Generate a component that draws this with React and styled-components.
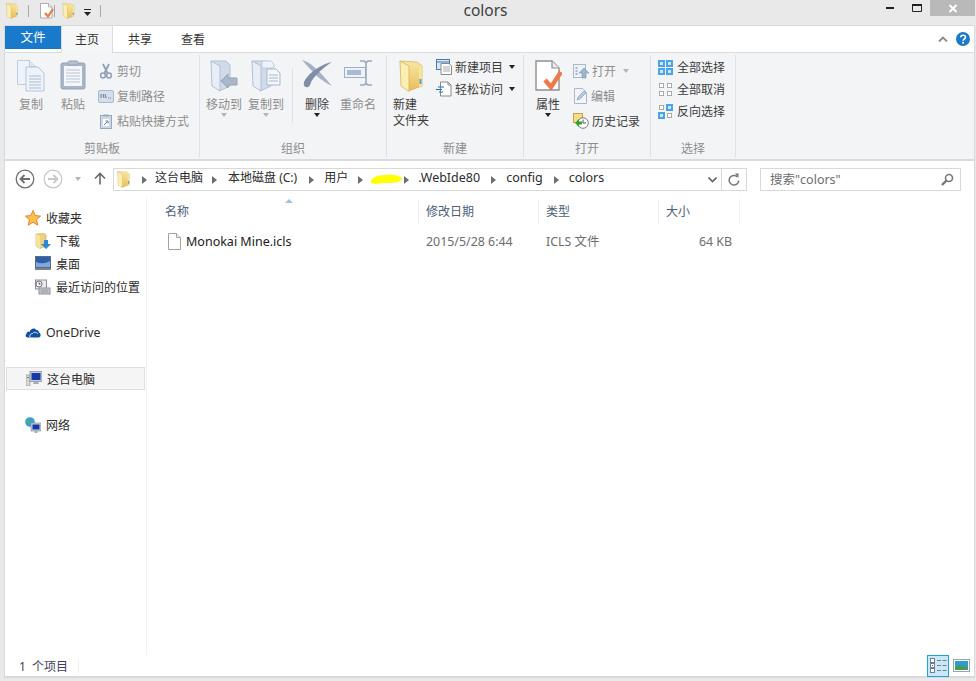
import React from 'react';
import styled, { createGlobalStyle } from 'styled-components';

const GlobalStyle = createGlobalStyle`
    html, body {
        margin: 0;
        padding: 0;
        background: #e9e9e9;
    }
    body {
        font-family: "Noto Sans", "Noto Sans CJK SC", sans-serif;
        font-size: 12px;
    }
    svg {
        display: block;
        flex: none;
    }
`;

const Window = styled.div`
    width: 976px;
    height: 681px;
    display: flex;
    flex-direction: column;
    background: #e9e9e9;
    overflow: hidden;
`;

const TitleBar = styled.div`
    height: 25px;
    flex: none;
    display: grid;
    grid-template-columns: 1fr auto 1fr;
`;

const QuickAccess = styled.div`
    display: flex;
    align-items: flex-start;
    padding: 3px 0 0 5px;
`;

const QuickSep = styled.div`
    width: 1px;
    height: 12px;
    margin: 2px ${(p) => p.$right}px 0 ${(p) => p.$left}px;
    background: #a8a8a8;
`;

const QuickMenu = styled.svg`
    margin: 6px 9px 0;
`;

const Title = styled.div`
    font-size: 15.5px;
    line-height: 21px;
    color: #404040;
    padding-right: 5px;
`;

const WindowButtons = styled.div`
    display: flex;
    justify-content: flex-end;
    align-items: flex-start;
    padding-right: 1px;
`;

const WinButton = styled.div`
    width: ${(p) => (p.$close ? 45 : 27)}px;
    height: 16px;
    display: flex;
    align-items: center;
    justify-content: center;
    background: ${(p) => (p.$close ? '#b9b9b9' : 'transparent')};
`;

const Client = styled.div`
    flex: 1;
    margin: 0 1px 3px 4px;
    min-height: 0;
    display: flex;
    flex-direction: column;
    background: #fff;
    border: 1px solid #d9d9d9;
    border-bottom: 2px solid #d9d9d9;
`;

const TabRow = styled.div`
    height: 26px;
    flex: none;
    display: flex;
    align-items: flex-start;
    border-bottom: 1px solid #dadbdc;
    position: relative;
`;

const FileTab = styled.div`
    width: 56px;
    height: 23px;
    line-height: 23px;
    text-align: center;
    color: #fff;
    background: #1979ca;
    font-size: 12.5px;
`;

const Tab = styled.div`
    width: ${(p) => p.$w}px;
    height: ${(p) => (p.$active ? 27 : 26)}px;
    line-height: 27px;
    text-align: center;
    color: #333;
    font-size: 12px;
    box-sizing: border-box;
    ${(p) => p.$active && `
        background: #f5f6f7;
        border-right: 1px solid #dadbdc;
        border-left: 1px solid #dadbdc;
    `}
`;

const TabTools = styled.div`
    margin-left: auto;
    height: 26px;
    display: flex;
    align-items: center;
    gap: 8px;
    padding-right: 4px;
`;

const Ribbon = styled.div`
    height: 106px;
    flex: none;
    display: flex;
    background: #f3f4f6;
    border-bottom: 2px solid #dadbdc;
    box-sizing: content-box;
`;

const Group = styled.div`
    width: ${(p) => p.$w}px;
    flex: none;
    margin-top: 2px;
    margin-bottom: 2px;
    display: flex;
    flex-direction: column;
    border-right: 1px solid #dfe1e4;
    box-sizing: border-box;
`;

const GroupBody = styled.div`
    flex: 1;
    display: flex;
    align-items: flex-start;
    padding-left: ${(p) => p.$pad || 0}px;
`;

const GroupLabel = styled.div`
    height: 20px;
    line-height: 24px;
    text-align: center;
    color: #8e8e8e;
`;

const BigButton = styled.div`
    width: ${(p) => p.$w || 42}px;
    flex: none;
    display: flex;
    flex-direction: column;
    align-items: center;
    color: ${(p) => (p.$off ? '#8d8d8d' : '#3c3c3c')};
    line-height: 16px;
    white-space: nowrap;
`;

const BigIcon = styled.div`
    height: 36px;
    padding-top: 5px;
    margin-bottom: 1px;
    display: flex;
    justify-content: center;
    box-sizing: content-box;
`;

const Caret = styled.div`
    width: 0;
    height: 0;
    flex: none;
    margin: ${(p) => p.$m || '0'};
    border-left: 3.5px solid transparent;
    border-right: 3.5px solid transparent;
    border-top: 4px solid ${(p) => (p.$off ? '#b5b5b5' : '#222')};
`;

const RibbonSep = styled.div`
    width: 1px;
    height: 55px;
    margin: 13px 5px 0 5px;
    background: #dfe1e4;
    flex: none;
`;

const SmallColumn = styled.div`
    display: flex;
    flex-direction: column;
    gap: ${(p) => p.$gap}px;
    padding-top: ${(p) => p.$top}px;
    margin-left: ${(p) => p.$left || 0}px;
`;

const SmallButton = styled.div`
    height: 18px;
    display: flex;
    align-items: center;
    gap: ${(p) => p.$gap || 3}px;
    white-space: nowrap;
    color: ${(p) => (p.$off ? '#8d8d8d' : '#3c3c3c')};
`;

const ShortcutSlot = styled.span`
    width: 16px;
    display: flex;
    justify-content: center;
`;

const AddressRow = styled.div`
    height: 37px;
    flex: none;
    display: flex;
    align-items: flex-start;
    padding-top: 7px;
    box-sizing: border-box;
`;

const NavButtons = styled.div`
    width: 108px;
    height: 23px;
    flex: none;
    display: flex;
    align-items: center;
    padding: 0 0 2px 10px;
    box-sizing: border-box;
    gap: ${(p) => p.$gap || 0}px;
`;

const NavSpacer = styled.span`
    width: ${(p) => p.$w}px;
`;

const AddressField = styled.div`
    width: 634px;
    height: 23px;
    flex: none;
    display: flex;
    align-items: center;
    border: 1px solid #d9d9d9;
    box-sizing: border-box;
    color: #2c2c2c;
    padding-left: 2px;
`;

const Crumb = styled.span`
    margin: 0 ${(p) => p.$after}px 4px ${(p) => p.$before}px;
    line-height: 20px;
    font-size: ${(p) => (p.$latin ? 12.5 : 12)}px;
    white-space: nowrap;
`;

const CrumbArrow = styled.div`
    width: 0;
    height: 0;
    flex: none;
    margin-left: ${(p) => p.$left || 0}px;
    border-top: 4px solid transparent;
    border-bottom: 4px solid transparent;
    border-left: 5px solid #6e6e6e;
`;

const Redaction = styled.svg`
    margin-left: 7px;
`;

const AddressEnd = styled.div`
    margin-left: auto;
    display: flex;
    align-items: center;
    height: 100%;
`;

const RefreshCell = styled.div`
    width: 24px;
    height: 100%;
    display: flex;
    align-items: center;
    justify-content: center;
    border-left: 1px solid #d9d9d9;
    margin-left: 4px;
`;

const SearchField = styled.div`
    width: 201px;
    height: 23px;
    margin-left: 13px;
    flex: none;
    display: flex;
    align-items: center;
    justify-content: space-between;
    padding: 0 6px 0 9px;
    box-sizing: border-box;
    border: 1px solid #d9d9d9;
    color: #6d6d6d;
    font-size: 12.5px;
`;

const SearchText = styled.span`
    margin-bottom: 3px;
`;

const Main = styled.div`
    flex: 1;
    min-height: 0;
    display: flex;
`;

const Sidebar = styled.div`
    width: 142px;
    flex: none;
    padding-top: 8px;
    box-sizing: border-box;
    border-right: 1px solid #f1f1f1;
`;

const NavSection = styled.div`
    margin-bottom: 23px;
`;

const NavRow = styled.div`
    height: 23px;
    display: flex;
    align-items: center;
    gap: 5px;
    padding-left: ${(p) => (p.$child ? 30 : 20)}px;
    color: #2c2c2c;
    font-size: ${(p) => (p.$latin ? 12.3 : 12)}px;
    white-space: nowrap;
    box-sizing: border-box;
    ${(p) => p.$selected && `
        margin: 0 1px;
        padding-left: 19px;
        background: #f5f5f5;
        border: 1px solid #dedede;
    `}
`;

const FileArea = styled.div`
    flex: 1;
    position: relative;
`;

const HeaderRow = styled.div`
    height: 23px;
    display: grid;
    grid-template-columns: 272px 120px 120px 81px;
    padding-top: 1px;
`;

const HeaderCell = styled.div`
    border-right: 1px solid #eef0f3;
    padding-left: ${(p) => (p.$first ? 18 : 7)}px;
    line-height: 25px;
    color: #4c6079;
    font-size: 12px;
`;

const SortMark = styled.div`
    position: absolute;
    left: 138px;
    top: 1px;
    width: 0;
    height: 0;
    border-left: 4px solid transparent;
    border-right: 4px solid transparent;
    border-bottom: 4px solid #9fc3dd;
`;

const FileRow = styled.div`
    height: 22px;
    margin-top: 8px;
    display: grid;
    grid-template-columns: 272px 120px 120px 73px;
    align-items: center;
    color: #6d6d6d;
`;

const NameCell = styled.div`
    display: flex;
    align-items: center;
    gap: 5px;
    padding-left: 21px;
    color: #202020;
    font-size: 12.5px;
`;

const MetaCell = styled.div`
    padding-left: ${(p) => (p.$right ? 0 : 7)}px;
    text-align: ${(p) => (p.$right ? 'right' : 'left')};
    font-size: 12.4px;
`;

const StatusBar = styled.div`
    height: 21px;
    flex: none;
    display: flex;
    align-items: center;
    color: #3f3f5a;
    padding-left: 14px;
    word-spacing: 3px;
`;

const StatusSep = styled.div`
    width: 1px;
    height: 14px;
    margin-left: 10px;
    background: #f0f0f0;
`;

const ViewButtons = styled.div`
    margin-left: auto;
    height: 100%;
    display: flex;
    align-items: center;
    gap: 1px;
    padding-right: 2px;
`;

const ViewButton = styled.div`
    width: 22px;
    height: 22px;
    display: flex;
    align-items: center;
    justify-content: center;
    box-sizing: border-box;
    ${(p) => p.$active && `
        background: #cbe8f6;
        border: 1px solid #26a0da;
    `}
`;

const Folder = ({ w = 14, h = 17 }) => (
    <svg width={w} height={h} viewBox="0 0 24 32">
        <defs>
            <linearGradient id="folderBack" x1="0" y1="0" x2="0" y2="1">
                <stop offset="0" stopColor="#f8e7a6" />
                <stop offset="1" stopColor="#e9bd57" />
            </linearGradient>
        </defs>
        <path d="M1 1 L18 2 L23 6 L23 26 L9 31 Z" fill="url(#folderBack)" stroke="#d0aa52" strokeWidth="0.7" />
        <path d="M1 1 L10 6 L10 31.5 L2 26 Z" fill="#fbeeb5" stroke="#d6b25c" strokeWidth="0.8" />
        <path d="M20 6 L23 6 L23 26 L20 27 Z" fill="#f8e39a" />
        <rect x="20.5" y="19" width="2" height="5" fill="#5b9bd5" />
    </svg>
);

const DocCheck = ({ w = 15, h = 17 }) => (
    <svg width={w} height={h} viewBox="0 0 28 32">
        <path d="M2 1 H18 L25 8 V30 H2 Z" fill="#fff" stroke="#8f8f8f" strokeWidth="1.4" />
        <path d="M18 1 V8 H25" fill="#ececec" stroke="#8f8f8f" strokeWidth="1.2" />
        <path d="M11 20 L17 27 L27 12" fill="none" stroke="#ec7a4b" strokeWidth="4.5" />
    </svg>
);

const PalePage = ({ x, y }) => (
    <g>
        <path d={`M${x} ${y} h12 l6 6 v18 h-18 z`} fill="#eef2f9" stroke="#bfcde0" strokeWidth="1" />
        <path d={`M${x + 12} ${y} v6 h6`} fill="#dfe7f2" stroke="#bfcde0" strokeWidth="1" />
    </g>
);

const CopyIcon = () => (
    <svg width="28" height="32" viewBox="0 0 28 32">
        <PalePage x={0.5} y={0.5} />
        <path d="M9 7 h12 l6 6 v18 h-18 z" fill="#eef2f9" stroke="#b5c5da" />
        <path d="M12 16 h12 M12 19 h12 M12 22 h12 M12 25 h12 M12 28 h12" stroke="#aebccf" strokeWidth="1" />
    </svg>
);

const PasteIcon = () => (
    <svg width="26" height="30" viewBox="0 0 26 30">
        <rect x="1" y="3" width="24" height="26" rx="2" fill="#a9b6c8" stroke="#94a3b7" />
        <rect x="4" y="6" width="18" height="20" fill="#f4f6fa" />
        <path d="M6 10 h14 M6 13 h14 M6 16 h14 M6 19 h14 M6 22 h14" stroke="#b8c5d6" />
        <rect x="8" y="1" width="10" height="4" rx="1.5" fill="#b6c1d0" stroke="#94a3b7" />
    </svg>
);

const ScissorsIcon = () => (
    <svg width="16" height="16" viewBox="0 0 16 16">
        <path d="M5 1 L9.5 10 M11 1 L6.5 10" stroke="#8fa0b8" strokeWidth="1.8" fill="none" />
        <circle cx="5" cy="12.5" r="2.4" fill="none" stroke="#8fa0b8" strokeWidth="1.5" />
        <circle cx="11" cy="12.5" r="2.4" fill="none" stroke="#8fa0b8" strokeWidth="1.5" />
    </svg>
);

const CopyPathIcon = () => (
    <svg width="16" height="13" viewBox="0 0 16 13">
        <rect x="0.5" y="0.5" width="15" height="12" rx="1.5" fill="#d5deee" stroke="#aab8cd" />
        <path d="M3 4 L3 8 M5 4 L6 8 M7 4 L8 8 M10 8 h1 M12 8 h1" stroke="#66788f" />
    </svg>
);

const ShortcutIcon = () => (
    <svg width="12" height="15" viewBox="0 0 12 15">
        <rect x="0.5" y="1.5" width="11" height="13" fill="#cfd8e6" stroke="#98a8bd" />
        <rect x="3" y="5" width="6" height="7" fill="#fff" />
        <path d="M4 11 L7.5 7.5 M5.5 7 H8 V9.5" stroke="#66788f" fill="none" />
        <rect x="3.5" y="0.5" width="5" height="2" fill="#98a8bd" />
    </svg>
);

const MoveToIcon = () => (
    <svg width="28" height="32" viewBox="0 0 28 32">
        <path d="M1 1 L16 1 L20 5 L20 26 L9 31 Z" fill="#cfdaea" stroke="#b3c1d5" />
        <path d="M1 1 L10 6 L10 31 L2 26 Z" fill="#e8eef6" stroke="#b3c1d5" />
        <path d="M11 21 L18 14 V18 H27 V25 H18 V28 Z" fill="#a9b7cb" stroke="#94a3b7" />
    </svg>
);

const CopyToIcon = () => (
    <svg width="30" height="32" viewBox="0 0 30 32">
        <path d="M1 1 L16 1 L20 5 L20 26 L9 31 Z" fill="#cfdaea" stroke="#b3c1d5" />
        <path d="M1 1 L10 6 L10 31 L2 26 Z" fill="#e8eef6" stroke="#b3c1d5" />
        <path d="M11 1 h9 l3 3 v4 h-12 z" fill="#eef2f9" stroke="#bfcde0" />
        <path d="M16 9 h9 l4 4 v12 h-13 z" fill="#f4f6fa" stroke="#a9b7cb" />
        <path d="M18 15 h9 M18 18 h9 M18 21 h9" stroke="#a9b7cb" />
    </svg>
);

const DeleteIcon = () => (
    <svg width="30" height="28" viewBox="0 0 30 28">
        <path d="M0 0 C8 2 16 9 30 26 C22 22 14 16 10 11 C6 7 3 3 0 0 Z" fill="#a5b1c4" />
        <path d="M30 2 C20 4 8 12 3 20 C0 25 3 28 6 27 C9 26 8 22 11 19 C16 12 24 6 30 2 Z" fill="#7f8ea8" />
    </svg>
);

const RenameIcon = () => (
    <svg width="29" height="26" viewBox="0 0 29 26">
        <rect x="0.5" y="7.5" width="21" height="10" fill="#eef2f9" stroke="#9fb0c8" />
        <rect x="3" y="10" width="14" height="5" fill="#a9bad2" />
        <path d="M16 1 h4 l2 1.5 l2 -1.5 h4 M22 2.5 V23.5 M16 25 h4 l2 -1.5 l2 1.5 h4" stroke="#9aa9bf" strokeWidth="1.6" fill="none" />
    </svg>
);

const NewItemIcon = () => (
    <svg width="16" height="16" viewBox="0 0 16 16">
        <rect x="0.5" y="0.5" width="13" height="10" fill="#dce8f6" stroke="#3f7cbc" />
        <path d="M0.5 3 h13" stroke="#3f7cbc" />
        <path d="M5 4.5 h8 l2.5 2.5 v8.5 h-10.5 z" fill="#fff" stroke="#8a8a8a" />
        <path d="M7 8 h7 M7 10 h7 M7 12 h7" stroke="#a8a8a8" />
    </svg>
);

const EasyAccessIcon = () => (
    <svg width="16" height="16" viewBox="0 0 16 16">
        <path d="M4.5 1 h7.5 l3 3 v11 h-10.5 z" fill="#fff" stroke="#8a8a8a" />
        <path d="M12 1 v3 h3" fill="none" stroke="#8a8a8a" />
        <path d="M2 6 h6 M0 8.5 h6 M3 11 h4" stroke="#1f6fc0" strokeWidth="1.2" />
    </svg>
);

const OpenIcon = () => (
    <svg width="16" height="16" viewBox="0 0 16 16">
        <rect x="0.5" y="1.5" width="12" height="13" fill="#eef2f9" stroke="#a9b7cb" />
        <path d="M2.5 5 h2 M2.5 8 h2 M2.5 11 h2" stroke="#8fa0b8" strokeWidth="1.5" />
        <path d="M6 10 L11 5 L16 10 H13 V15 H9 V10 Z" fill="#9db4d2" stroke="#7f96b5" strokeWidth="0.6" />
    </svg>
);

const EditIcon = () => (
    <svg width="15" height="16" viewBox="0 0 15 16">
        <path d="M1.5 0.5 h8 l4 4 v11 h-12 z" fill="#f4f6fa" stroke="#a9b7cb" />
        <path d="M4 12 L5 9 L11 3 L13 5 L7 11 Z" fill="#b7c9e4" stroke="#8aa0c0" strokeWidth="0.7" />
    </svg>
);

const HistoryIcon = () => (
    <svg width="16" height="16" viewBox="0 0 16 16">
        <rect x="0.5" y="0.5" width="9" height="9" fill="#f4dc8b" stroke="#c9a24a" />
        <circle cx="10" cy="10" r="5.3" fill="#fff" stroke="#7d7d7d" />
        <path d="M10 6.5 V10 H13" stroke="#555" fill="none" />
        <path d="M2 10 L6 6 V8.5 H9 V11.5 H6 V14 Z" fill="#2fa32f" />
    </svg>
);

const TileGrid = ({ on }) => (
    <svg width="15" height="15" viewBox="0 0 15 15">
        {[[0, 0], [8, 0], [0, 8], [8, 8]].map(([x, y], i) => (
            on[i]
                ? <rect key={i} x={x} y={y} width="7" height="7" fill="#4aa3ec" />
                : <rect key={i} x={x + 1.5} y={y + 1.5} width="4" height="4" fill="#fff" stroke="#a9a9a9" />
        ))}
        {on.map((v, i) => (v ? <rect key={`c${i}`} x={(i % 2) * 8 + 2} y={(i > 1 ? 8 : 0) + 2} width="3" height="3" fill="#cfe7fb" /> : null))}
    </svg>
);

const BackIcon = ({ off }) => {
    const c = off ? '#c8c8c8' : '#6f6f6f';
    return (
        <svg width="20" height="20" viewBox="0 0 20 20">
            <circle cx="10" cy="10" r="8.8" fill="#fff" stroke={c} strokeWidth="1.3" />
            <path d={off ? 'M5 10 H14 M10.5 6 L14.5 10 L10.5 14' : 'M15 10 H6 M9.5 6 L5.5 10 L9.5 14'} fill="none" stroke={c} strokeWidth="1.8" />
        </svg>
    );
};

const UpIcon = () => (
    <svg width="12" height="13" viewBox="0 0 12 13">
        <path d="M6 12.5 V2 M1 6.5 L6 1.5 L11 6.5" fill="none" stroke="#6a6a6a" strokeWidth="1.6" />
    </svg>
);

const RefreshIcon = () => (
    <svg width="12" height="13" viewBox="0 0 12 13">
        <path d="M9.5 4 A4.8 4.8 0 1 0 10.8 7.5" fill="none" stroke="#777" strokeWidth="1.5" />
        <path d="M7 0.5 L10.5 0.5 L10.5 5 Z" fill="#777" />
    </svg>
);

const ChevronDown = () => (
    <svg width="9" height="6" viewBox="0 0 9 6">
        <path d="M0.5 0.5 L4.5 4.5 L8.5 0.5" fill="none" stroke="#666" strokeWidth="1.6" />
    </svg>
);

const SearchIcon = () => (
    <svg width="13" height="13" viewBox="0 0 13 13">
        <circle cx="8" cy="5" r="3.5" fill="none" stroke="#777" strokeWidth="1.6" />
        <path d="M5.5 7.5 L1 12" stroke="#777" strokeWidth="2.4" />
    </svg>
);

const StarIcon = () => (
    <svg width="16" height="16" viewBox="0 0 16 16">
        <path d="M8 0.5 L10.2 5.6 L15.6 6.1 L11.5 9.7 L12.8 15.2 L8 12.3 L3.2 15.2 L4.5 9.7 L0.4 6.1 L5.8 5.6 Z" fill="#fcc34c" stroke="#e8742c" strokeWidth="0.9" />
    </svg>
);

const DownloadIcon = () => (
    <svg width="16" height="16" viewBox="0 0 16 16">
        <path d="M1 1 L9 0.5 L11 2 V13 L5 15.5 L1 13 Z" fill="#f0d27e" stroke="#c9a24a" strokeWidth="0.6" />
        <path d="M1 1 L5 3 V15.5 L1 13 Z" fill="#f7e49b" />
        <path d="M9 7 H13 V11 H16 L11 16 L6 11 H9 Z" fill="#2d86d8" />
    </svg>
);

const DesktopIcon = () => (
    <svg width="16" height="15" viewBox="0 0 16 15">
        <rect x="0.5" y="0.5" width="15" height="11" fill="#2d5fa8" stroke="#5d6d80" />
        <path d="M1 6 Q8 9 15 5 V11 H1 Z" fill="#7fa8d8" />
        <rect x="0" y="12" width="16" height="2" fill="#78838f" />
    </svg>
);

const RecentIcon = () => (
    <svg width="16" height="16" viewBox="0 0 16 16">
        <rect x="0.5" y="1" width="11" height="9" fill="#e8eaec" stroke="#8b8f95" />
        <circle cx="4" cy="5" r="3" fill="#fff" stroke="#6f7378" />
        <path d="M4 3.5 V5 H5.5" stroke="#444" fill="none" />
        <rect x="4" y="9" width="11" height="6" fill="#cfd2d6" stroke="#8b8f95" />
        <path d="M5.5 11 h8 M5.5 13 h8" stroke="#8b8f95" />
    </svg>
);

const OneDriveIcon = () => (
    <svg width="16" height="11" viewBox="0 0 16 11">
        <path d="M3 10.5 C0.5 10.5 0 8 1.5 6.8 C1.5 5 3.5 4.5 4.5 5 C5.5 1.5 9.5 0 11.5 3 C13 3 14 4 14 5.5 C16 6 16.5 10.5 13.5 10.5 Z" fill="#0f4fa3" />
        <path d="M5 10.5 C4 8.5 5.5 6.5 7.5 6.5 C9 4.5 12 5 13 7" fill="none" stroke="#fff" strokeWidth="0.8" />
    </svg>
);

const PcIcon = () => (
    <svg width="16" height="15" viewBox="0 0 16 15">
        <rect x="0" y="4" width="4" height="11" fill="#d6d6d6" stroke="#8c8c8c" strokeWidth="0.6" />
        <rect x="1" y="6" width="2" height="1" fill="#33a833" />
        <rect x="4" y="0.5" width="12" height="10" fill="#c9ced6" stroke="#8b929c" strokeWidth="0.8" />
        <rect x="5.5" y="2" width="9" height="7" fill="#1438a8" />
        <path d="M8 11 h4 l1 2 h-6 z" fill="#a8adb5" />
    </svg>
);

const NetworkIcon = () => (
    <svg width="16" height="16" viewBox="0 0 16 16">
        <circle cx="5" cy="5" r="4.8" fill="#35a0dc" />
        <path d="M2 3 Q5 2 5 5 Q3 8 2 6 Z M6 1 Q9 2 8 4 Z" fill="#57b548" />
        <rect x="6" y="6" width="10" height="8" fill="#c9ced6" stroke="#8b929c" strokeWidth="0.7" />
        <rect x="7.5" y="7.5" width="7" height="5" fill="#1438a8" />
        <path d="M9.5 14 h3 v2 h-3 z" fill="#a8adb5" />
    </svg>
);

const FileIcon = () => (
    <svg width="13" height="17" viewBox="0 0 13 17">
        <path d="M0.5 0.5 h8 l4 4 v12 h-12 z" fill="#fff" stroke="#a3a3a3" />
        <path d="M8.5 0.5 v4 h4" fill="#f0f0f0" stroke="#a3a3a3" />
    </svg>
);

const DetailViewIcon = () => (
    <svg width="17" height="15" viewBox="0 0 17 15">
        <rect x="0.5" y="0.5" width="4" height="4" fill="#fff" stroke="#6d7f96" />
        <rect x="0.5" y="5.5" width="4" height="4" fill="#fff" stroke="#6d7f96" />
        <rect x="0.5" y="10.5" width="4" height="4" fill="#fff" stroke="#6d7f96" />
        <rect x="2" y="7" width="1" height="1" fill="#d01c1c" />
        <path d="M7 2.5 h4 M12.5 2.5 h4 M7 7.5 h4 M12.5 7.5 h4 M7 12.5 h4 M12.5 12.5 h4" stroke="#6d7f96" strokeWidth="1.2" />
    </svg>
);

const ThumbViewIcon = () => (
    <svg width="17" height="13" viewBox="0 0 17 13">
        <rect x="0.5" y="0.5" width="16" height="12" fill="#fff" stroke="#9aa3ae" />
        <rect x="2" y="2" width="13" height="9" fill="#2f9cc9" />
        <path d="M2 9 Q7 4 9 8 Q11 6 15 9 V11 H2 Z" fill="#4b9a52" />
    </svg>
);

function App() {
    return (
        <Window>
            <GlobalStyle />
            <TitleBar>
                <QuickAccess>
                    <Folder w={14} h={16} />
                    <QuickSep $left={9} $right={10} />
                    <DocCheck w={15} h={16} />
                    <QuickSep $left={0} $right={7} />
                    <Folder w={13} h={16} />
                    <QuickMenu width="7" height="7" viewBox="0 0 7 7">
                        <path d="M0 0 H7 V1 H0 Z M0 3 H7 L3.5 7 Z" fill="#222" />
                    </QuickMenu>
                    <QuickSep $left={0} $right={0} />
                </QuickAccess>
                <Title>colors</Title>
                <WindowButtons>
                    <WinButton>
                        <svg width="8" height="2" viewBox="0 0 8 2"><rect width="8" height="2" fill="#222" /></svg>
                    </WinButton>
                    <WinButton>
                        <svg width="10" height="8" viewBox="0 0 10 8"><path d="M0.5 1 H9.5 V7.5 H0.5 Z" fill="none" stroke="#222" /><rect width="10" height="2" fill="#222" /></svg>
                    </WinButton>
                    <WinButton $close>
                        <svg width="10" height="9" viewBox="0 0 10 9"><path d="M1.5 1 L8.5 8 M8.5 1 L1.5 8" stroke="#fff" strokeWidth="2" /></svg>
                    </WinButton>
                </WindowButtons>
            </TitleBar>
            <Client>
                <TabRow>
                    <FileTab>文件</FileTab>
                    <Tab $w={52} $active>主页</Tab>
                    <Tab $w={54}>共享</Tab>
                    <Tab $w={52}>查看</Tab>
                    <TabTools>
                        <svg width="10" height="6" viewBox="0 0 10 6">
                            <path d="M1 5.5 L5 1.5 L9 5.5" fill="none" stroke="#8a8a8a" strokeWidth="1.8" />
                        </svg>
                        <svg width="14" height="14" viewBox="0 0 14 14">
                            <circle cx="7" cy="7" r="7" fill="#1979ca" />
                            <path d="M4.7 5.2 C4.7 2.5 9.5 2.5 9.5 5.2 C9.5 7 7.1 7 7.1 8.8" fill="none" stroke="#fff" strokeWidth="1.6" />
                            <rect x="6.2" y="9.8" width="1.8" height="1.8" fill="#fff" />
                        </svg>
                    </TabTools>
                </TabRow>
                <Ribbon>
                    <Group $w={195}>
                        <GroupBody $pad={5}>
                            <BigButton $off>
                                <BigIcon><CopyIcon /></BigIcon>
                                复制
                            </BigButton>
                            <BigButton $off>
                                <BigIcon><PasteIcon /></BigIcon>
                                粘贴
                            </BigButton>
                            <SmallColumn $gap={7} $top={7} $left={4}>
                                <SmallButton $off><ScissorsIcon />剪切</SmallButton>
                                <SmallButton $off><CopyPathIcon />复制路径</SmallButton>
                                <SmallButton $off>
                                    <ShortcutSlot><ShortcutIcon /></ShortcutSlot>
                                    粘贴快捷方式
                                </SmallButton>
                            </SmallColumn>
                        </GroupBody>
                        <GroupLabel>剪贴板</GroupLabel>
                    </Group>
                    <Group $w={187}>
                        <GroupBody $pad={3}>
                            <BigButton $off>
                                <BigIcon><MoveToIcon /></BigIcon>
                                移动到
                                <Caret $off />
                            </BigButton>
                            <BigButton $off>
                                <BigIcon><CopyToIcon /></BigIcon>
                                复制到
                                <Caret $off />
                            </BigButton>
                            <RibbonSep />
                            <BigButton $w={38}>
                                <BigIcon><DeleteIcon /></BigIcon>
                                删除
                                <Caret />
                            </BigButton>
                            <BigButton $w={44} $off>
                                <BigIcon><RenameIcon /></BigIcon>
                                重命名
                            </BigButton>
                        </GroupBody>
                        <GroupLabel>组织</GroupLabel>
                    </Group>
                    <Group $w={137}>
                        <GroupBody $pad={3}>
                            <BigButton $w={42}>
                                <BigIcon><Folder w={24} h={32} /></BigIcon>
                                新建
                                <br />
                                文件夹
                            </BigButton>
                            <SmallColumn $gap={4} $top={3} $left={4}>
                                <SmallButton><NewItemIcon />新建项目<Caret $m="0 0 0 3px" /></SmallButton>
                                <SmallButton><EasyAccessIcon />轻松访问<Caret $m="0 0 0 3px" /></SmallButton>
                            </SmallColumn>
                        </GroupBody>
                        <GroupLabel>新建</GroupLabel>
                    </Group>
                    <Group $w={127}>
                        <GroupBody $pad={3}>
                            <BigButton $w={42}>
                                <BigIcon><DocCheck w={28} h={32} /></BigIcon>
                                属性
                                <Caret />
                            </BigButton>
                            <SmallColumn $gap={7} $top={7} $left={4}>
                                <SmallButton $off><OpenIcon />打开<Caret $off $m="0 0 0 4px" /></SmallButton>
                                <SmallButton $off><EditIcon />编辑</SmallButton>
                                <SmallButton><HistoryIcon />历史记录</SmallButton>
                            </SmallColumn>
                        </GroupBody>
                        <GroupLabel>打开</GroupLabel>
                    </Group>
                    <Group $w={85}>
                        <GroupBody $pad={7}>
                            <SmallColumn $gap={4} $top={3}>
                                <SmallButton $gap={4}><TileGrid on={[1, 1, 1, 1]} />全部选择</SmallButton>
                                <SmallButton $gap={4}><TileGrid on={[0, 0, 0, 0]} />全部取消</SmallButton>
                                <SmallButton $gap={4}><TileGrid on={[0, 1, 1, 0]} />反向选择</SmallButton>
                            </SmallColumn>
                        </GroupBody>
                        <GroupLabel>选择</GroupLabel>
                    </Group>
                </Ribbon>
                <AddressRow>
                    <NavButtons>
                        <BackIcon />
                        <NavSpacer $w={8} />
                        <BackIcon off />
                        <Caret $off $m="0 0 0 12px" />
                        <NavSpacer $w={13} />
                        <UpIcon />
                    </NavButtons>
                    <AddressField>
                        <Folder w={15} h={17} />
                        <CrumbArrow $left={11} />
                        <Crumb $before={8} $after={9}>这台电脑</Crumb>
                        <CrumbArrow />
                        <Crumb $before={11} $after={12}>本地磁盘 (C:)</Crumb>
                        <CrumbArrow />
                        <Crumb $before={10} $after={0}>用户</Crumb>
                        <CrumbArrow $left={10} />
                        <Redaction width="32" height="11" viewBox="0 0 32 11">
                            <path d="M1 7 C2 3 9 1 16 1 C24 0 31 2 32 5 C31 9 22 9 15 9 C8 10 0 11 1 7 Z" fill="#ffff00" />
                        </Redaction>
                        <CrumbArrow $left={2} />
                        <Crumb $latin $before={9} $after={11}>.WebIde80</Crumb>
                        <CrumbArrow />
                        <Crumb $latin $before={10} $after={11}>config</Crumb>
                        <CrumbArrow />
                        <Crumb $latin $before={10} $after={0}>colors</Crumb>
                        <AddressEnd>
                            <ChevronDown />
                            <RefreshCell><RefreshIcon /></RefreshCell>
                        </AddressEnd>
                    </AddressField>
                    <SearchField>
                        <SearchText>搜索"colors"</SearchText>
                        <SearchIcon />
                    </SearchField>
                </AddressRow>
                <Main>
                    <Sidebar>
                        <NavSection>
                            <NavRow><StarIcon />收藏夹</NavRow>
                            <NavRow $child><DownloadIcon />下载</NavRow>
                            <NavRow $child><DesktopIcon />桌面</NavRow>
                            <NavRow $child><RecentIcon />最近访问的位置</NavRow>
                        </NavSection>
                        <NavSection>
                            <NavRow $latin><OneDriveIcon />OneDrive</NavRow>
                        </NavSection>
                        <NavSection>
                            <NavRow $selected><PcIcon />这台电脑</NavRow>
                        </NavSection>
                        <NavSection>
                            <NavRow><NetworkIcon />网络</NavRow>
                        </NavSection>
                    </Sidebar>
                    <FileArea>
                        <SortMark />
                        <HeaderRow>
                            <HeaderCell $first>名称</HeaderCell>
                            <HeaderCell>修改日期</HeaderCell>
                            <HeaderCell>类型</HeaderCell>
                            <HeaderCell>大小</HeaderCell>
                        </HeaderRow>
                        <FileRow>
                            <NameCell><FileIcon />Monokai Mine.icls</NameCell>
                            <MetaCell>2015/5/28 6:44</MetaCell>
                            <MetaCell>ICLS 文件</MetaCell>
                            <MetaCell $right>64 KB</MetaCell>
                        </FileRow>
                    </FileArea>
                </Main>
                <StatusBar>
                    1 个项目
                    <StatusSep />
                    <ViewButtons>
                        <ViewButton $active><DetailViewIcon /></ViewButton>
                        <ViewButton><ThumbViewIcon /></ViewButton>
                    </ViewButtons>
                </StatusBar>
            </Client>
        </Window>
    );
}

export default App;
